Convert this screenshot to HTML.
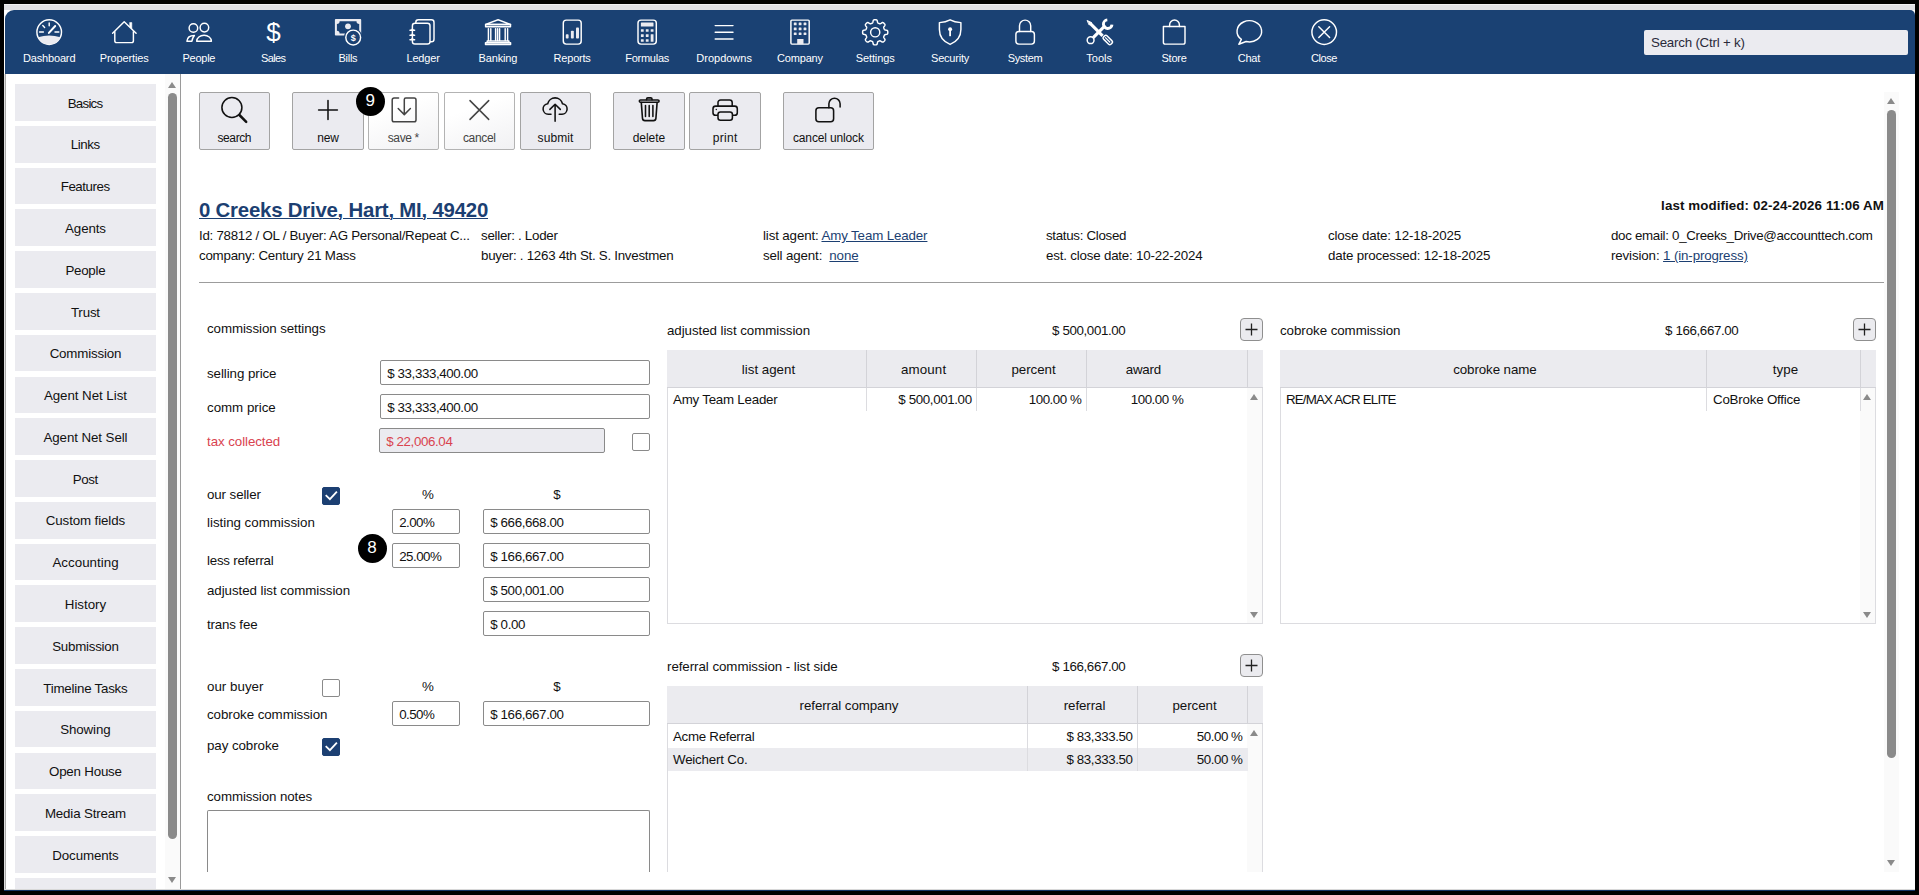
<!DOCTYPE html><html><head><meta charset='utf-8'><title>Commission</title><style>
*{box-sizing:border-box;margin:0;padding:0}
html,body{width:1919px;height:895px;overflow:hidden;background:#000}
body{position:relative;font-family:"Liberation Sans",sans-serif;font-size:13.33px;color:#111}
.a{position:absolute;white-space:nowrap}
.t{position:absolute;white-space:nowrap}
.sb{position:absolute;left:9px;width:141px;height:36.8px;background:#ebebf0}
.tb{position:absolute;top:92px;height:58px;background:#ebebf0;border:1px solid #a3a3a3;border-radius:2px}
.tb.dis{background:linear-gradient(160deg,#fff 30%,#f1f1f3);border-color:#b3b3b3}
.badge{position:absolute;width:29px;height:29px;border-radius:50%;background:#000}
.lnk{color:#1c3f72;text-decoration:underline}
.inp{position:absolute;height:25px;border:1px solid #8a8a8a;border-radius:2px;background:#fff}
.cb{position:absolute;width:18px;height:18px;border:1px solid #8a8a8a;border-radius:2px;background:#fff}
.cb.on{background:#1c3f72;border-color:#1c3f72}
.cb svg{position:absolute;left:0;top:0;width:16px;height:16px}
.th{position:absolute;background:#ebebef;border-right:1px solid #d3d3d8;border-bottom:1px solid #d3d3d8;height:37px}
.plus{position:absolute;width:23px;height:23px;border:1px solid #8f8f8f;border-radius:4px;background:#ebebef}
.plus svg{position:absolute;left:2px;top:2px;width:17px;height:17px}
.tri{position:absolute;width:0;height:0;border-left:4.2px solid transparent;border-right:4.2px solid transparent}
.up{border-bottom:6px solid #8a8a8a}
.dn{border-top:6px solid #8a8a8a}
</style></head><body>
<div class='a' style='left:4px;top:4px;width:1911px;height:887px;background:#fff'></div>
<div class='a' style='left:4px;top:4px;width:1911px;height:6px;background:#dfdfe3;border-top:1px solid #f0f0f2'></div>
<div class='a' style='left:5px;top:10px;width:1910px;height:64px;background:#1a4173;border-radius:9px 5px 0 0'></div>
<div class='a' style='left:4px;top:890px;width:1911px;height:1px;background:#123364'></div>
<div class='a' style='left:4px;top:889px;width:1911px;height:1px;background:#d8d8d8'></div>
<div class='t' style='left:22.9px;top:49.8px;line-height:16px;font-size:11px;letter-spacing:-0.15px;color:#fff'>Dashboard</div>
<div class='t' style='left:99.8px;top:49.8px;line-height:16px;font-size:11px;letter-spacing:-0.13px;color:#fff'>Properties</div>
<div class='t' style='left:182.4px;top:49.8px;line-height:16px;font-size:11px;letter-spacing:-0.23px;color:#fff'>People</div>
<div class='t' style='left:261.0px;top:49.8px;line-height:16px;font-size:11px;letter-spacing:-0.65px;color:#fff'>Sales</div>
<div class='t' style='left:338.5px;top:49.8px;line-height:16px;font-size:11px;letter-spacing:-0.28px;color:#fff'>Bills</div>
<div class='t' style='left:406.5px;top:49.8px;line-height:16px;font-size:11px;letter-spacing:-0.19px;color:#fff'>Ledger</div>
<div class='t' style='left:478.6px;top:49.8px;line-height:16px;font-size:11px;letter-spacing:-0.17px;color:#fff'>Banking</div>
<div class='t' style='left:553.6px;top:49.8px;line-height:16px;font-size:11px;letter-spacing:-0.21px;color:#fff'>Reports</div>
<div class='t' style='left:625.2px;top:49.8px;line-height:16px;font-size:11px;letter-spacing:-0.25px;color:#fff'>Formulas</div>
<div class='t' style='left:696.3px;top:49.8px;line-height:16px;font-size:11px;color:#fff'>Dropdowns</div>
<div class='t' style='left:777.0px;top:49.8px;line-height:16px;font-size:11px;letter-spacing:-0.17px;color:#fff'>Company</div>
<div class='t' style='left:855.8px;top:49.8px;line-height:16px;font-size:11px;letter-spacing:-0.13px;color:#fff'>Settings</div>
<div class='t' style='left:931.0px;top:49.8px;line-height:16px;font-size:11px;letter-spacing:-0.21px;color:#fff'>Security</div>
<div class='t' style='left:1007.8px;top:49.8px;line-height:16px;font-size:11px;letter-spacing:-0.38px;color:#fff'>System</div>
<div class='t' style='left:1086.3px;top:49.8px;line-height:16px;font-size:11px;letter-spacing:0.01px;color:#fff'>Tools</div>
<div class='t' style='left:1161.4px;top:49.8px;line-height:16px;font-size:11px;letter-spacing:-0.19px;color:#fff'>Store</div>
<div class='t' style='left:1237.8px;top:49.8px;line-height:16px;font-size:11px;letter-spacing:-0.28px;color:#fff'>Chat</div>
<div class='t' style='left:1311.0px;top:49.8px;line-height:16px;font-size:11px;letter-spacing:-0.41px;color:#fff'>Close</div>
<div class='a' style='left:1644px;top:29.5px;width:264px;height:25px;background:#ebebf0;border-radius:2px'></div>
<div class='t' style='left:1651.0px;top:35.1px;line-height:16px;letter-spacing:-0.22px;color:#2a2a3a'>Search (Ctrl + k)</div>
<div class='a' style='left:4px;top:74px;width:177px;height:815px;background:#fff;border-left:1px solid #dcdcdc;border-right:1px solid #9a9a9a;overflow:hidden'>
<div class='a' style='left:0;top:0;width:1px;height:815px;background:#a8a8a8'></div>
<div class='sb' style='left:10px;top:10.0px'></div>
<div class='sb' style='left:10px;top:51.8px'></div>
<div class='sb' style='left:10px;top:93.6px'></div>
<div class='sb' style='left:10px;top:135.3px'></div>
<div class='sb' style='left:10px;top:177.1px'></div>
<div class='sb' style='left:10px;top:218.9px'></div>
<div class='sb' style='left:10px;top:260.7px'></div>
<div class='sb' style='left:10px;top:302.5px'></div>
<div class='sb' style='left:10px;top:344.2px'></div>
<div class='sb' style='left:10px;top:386.0px'></div>
<div class='sb' style='left:10px;top:427.8px'></div>
<div class='sb' style='left:10px;top:469.6px'></div>
<div class='sb' style='left:10px;top:511.4px'></div>
<div class='sb' style='left:10px;top:553.1px'></div>
<div class='sb' style='left:10px;top:594.9px'></div>
<div class='sb' style='left:10px;top:636.7px'></div>
<div class='sb' style='left:10px;top:678.5px'></div>
<div class='sb' style='left:10px;top:720.3px'></div>
<div class='sb' style='left:10px;top:762.0px'></div>
<div class='sb' style='left:10px;top:803.8px'></div>
<div class='a' style='left:160px;top:0;width:15px;height:815px;background:#fafafa'></div>
<div class='tri up' style='left:163.3px;top:7.5px'></div>
<div class='a' style='left:163px;top:19px;width:9px;height:746px;border-radius:5px;background:#8a8a8a'></div>
<div class='tri dn' style='left:163.3px;top:803px'></div>
</div>
<div class='t' style='left:67.7px;top:95.6px;line-height:16px;letter-spacing:-0.75px'>Basics</div>
<div class='t' style='left:70.8px;top:137.4px;line-height:16px;letter-spacing:-0.42px'>Links</div>
<div class='t' style='left:60.7px;top:179.2px;line-height:16px;letter-spacing:-0.44px'>Features</div>
<div class='t' style='left:65.1px;top:220.9px;line-height:16px;letter-spacing:-0.13px'>Agents</div>
<div class='t' style='left:65.4px;top:262.7px;line-height:16px;letter-spacing:-0.27px'>People</div>
<div class='t' style='left:70.9px;top:304.5px;line-height:16px;letter-spacing:-0.17px'>Trust</div>
<div class='t' style='left:49.7px;top:346.3px;line-height:16px;letter-spacing:-0.19px'>Commission</div>
<div class='t' style='left:43.9px;top:388.1px;line-height:16px;letter-spacing:-0.05px'>Agent Net List</div>
<div class='t' style='left:43.5px;top:429.8px;line-height:16px;letter-spacing:-0.09px'>Agent Net Sell</div>
<div class='t' style='left:72.7px;top:471.6px;line-height:16px;letter-spacing:-0.37px'>Post</div>
<div class='t' style='left:45.8px;top:513.4px;line-height:16px;letter-spacing:-0.12px'>Custom fields</div>
<div class='t' style='left:52.4px;top:555.2px;line-height:16px;letter-spacing:0.03px'>Accounting</div>
<div class='t' style='left:64.8px;top:597.0px;line-height:16px;letter-spacing:-0.02px'>History</div>
<div class='t' style='left:52.2px;top:638.7px;line-height:16px;letter-spacing:-0.25px'>Submission</div>
<div class='t' style='left:43.3px;top:680.5px;line-height:16px;letter-spacing:-0.23px'>Timeline Tasks</div>
<div class='t' style='left:60.3px;top:722.3px;line-height:16px;letter-spacing:-0.14px'>Showing</div>
<div class='t' style='left:49.0px;top:764.1px;line-height:16px;letter-spacing:-0.21px'>Open House</div>
<div class='t' style='left:44.9px;top:805.9px;line-height:16px;letter-spacing:-0.16px'>Media Stream</div>
<div class='t' style='left:52.3px;top:847.6px;line-height:16px;letter-spacing:-0.12px'>Documents</div>
<div class='tb' style='left:199px;width:71px'></div>
<div class='t' style='left:217.5px;top:129.5px;line-height:16px;font-size:12px;letter-spacing:-0.40px;color:#111'>search</div>
<div class='tb' style='left:292px;width:72px'></div>
<div class='t' style='left:317.2px;top:129.5px;line-height:16px;font-size:12px;letter-spacing:-0.16px;color:#111'>new</div>
<div class='tb dis' style='left:368px;width:71px'></div>
<div class='t' style='left:387.7px;top:129.5px;line-height:16px;font-size:12px;letter-spacing:-0.36px;color:#444'>save *</div>
<div class='tb dis' style='left:444px;width:71px'></div>
<div class='t' style='left:462.9px;top:129.5px;line-height:16px;font-size:12px;letter-spacing:-0.31px;color:#444'>cancel</div>
<div class='tb' style='left:520px;width:71px'></div>
<div class='t' style='left:537.6px;top:129.5px;line-height:16px;font-size:12px;letter-spacing:0.09px;color:#111'>submit</div>
<div class='tb' style='left:613px;width:72px'></div>
<div class='t' style='left:632.7px;top:129.5px;line-height:16px;font-size:12px;letter-spacing:-0.03px;color:#111'>delete</div>
<div class='tb' style='left:689px;width:72px'></div>
<div class='t' style='left:712.8px;top:129.5px;line-height:16px;font-size:12px;letter-spacing:0.28px;color:#111'>print</div>
<div class='tb' style='left:783px;width:91px'></div>
<div class='t' style='left:793.0px;top:129.5px;line-height:16px;font-size:12px;letter-spacing:-0.15px;color:#111'>cancel unlock</div>
<svg class='a' style='left:0;top:0' width='1919' height='895' viewBox='0 0 1919 895'><g stroke='#fff' fill='none' stroke-width='1.45' stroke-linecap='round' stroke-linejoin='round'><circle cx='49.2' cy='32.1' r='12.3'/><path d='M38 37.2Q49.2 33.6 60.4 37.2A12.3 12.3 0 0 1 38 37.2Z' fill='#ebebf0' stroke='none'/><path d='M39.6 32h3.8M55 32h3.8M49.2 23v2.8M42.8 25.6l1.8 1.8'/><path d='M48.9 32.9L55.2 26' stroke-width='2'/></g><g stroke='#fff' fill='none' stroke-width='1.45' stroke-linecap='round' stroke-linejoin='round' stroke-width='1.4'><path d='M112.6 33.3L124.2 21.8L136.1 33.3'/><path d='M114.8 31.6V41a1.6 1.6 0 0 0 1.6 1.6H131.8a1.6 1.6 0 0 0 1.6-1.6V31.6'/><path d='M129.9 22.6h1.9v6.2l-1.9-1.9z' fill='#fff' stroke-width='.6'/></g><g stroke='#fff' fill='none' stroke-width='1.45' stroke-linecap='round' stroke-linejoin='round'><circle cx='193.4' cy='28' r='4.3'/><circle cx='204.4' cy='27.6' r='4.3'/><path d='M196.7 41.2a7.35 5.9 0 0 1 14.7 0z'/><path d='M186.9 41.2C187.2 37.4 189.6 35.4 194.4 35.4C193 37 192.2 39 191.9 41.2Z'/></g><text x='273.5' y='40.8' font-size='26' fill='#fff' text-anchor='middle' font-family='Liberation Sans, sans-serif'>$</text><g><rect x='334.9' y='19.1' width='26.3' height='16.4' rx='.8' fill='#ebebf0'/><path d='M339.6 21.2H356.5A2.7 2.7 0 0 0 359.2 23.9V30.7A2.7 2.7 0 0 0 356.5 33.4H339.6A2.7 2.7 0 0 0 336.9 30.7V23.9A2.7 2.7 0 0 0 339.6 21.2Z' fill='#1a4173'/><circle cx='348' cy='26.3' r='2.9' fill='#ebebf0'/><circle cx='353.2' cy='37.5' r='9.3' fill='#1a4173'/><circle cx='353.2' cy='37.5' r='7.4' stroke='#fff' fill='none' stroke-width='1.45' stroke-linecap='round' stroke-linejoin='round'/><text x='353.2' y='40.7' font-size='9' font-weight='700' fill='#fff' text-anchor='middle' font-family='Liberation Sans, sans-serif'>$</text></g><g stroke='#fff' fill='none' stroke-width='1.45' stroke-linecap='round' stroke-linejoin='round'><rect x='415.8' y='19.8' width='18.2' height='22' rx='2.6'/><rect x='412.4' y='23.2' width='17.6' height='20.8' rx='2.6' fill='#1a4173'/><path d='M410 30.2h4.6M410 35.2h4.6M410 39.8h4.6' stroke-width='1.5'/><path d='M411.3 29.4l1-1 1 1zM411.3 34.4l1-1 1 1zM411.3 39l1-1 1 1z' fill='#fff' stroke-width='.6'/></g><g stroke='#fff' fill='none' stroke-width='1.45' stroke-linecap='round' stroke-linejoin='round' stroke-width='1.2' stroke-linejoin='miter'><path d='M485.6 24.4L498.1 19.8L510.5 24.4Z'/><path d='M485.6 24.4h24.9v2.3h-24.9z'/><path d='M488.4 28.6V40.6M490.8 28.6V40.6M495.6 28.6V40.6M497.6 28.6V40.6M499.6 28.6V40.6M505.2 28.6V40.6M507.6 28.6V40.6'/><path d='M487.2 40.9h21.7v1.8h-21.7zM485.5 42.7h25.1v1.8h-25.1z'/></g><g stroke='#fff' fill='none' stroke-width='1.45' stroke-linecap='round' stroke-linejoin='round'><rect x='563.3' y='20.1' width='17.9' height='24' rx='3'/></g><g fill='#ebebf0'><rect x='565.8' y='34.3' width='2.8' height='4.2' rx='.8'/><rect x='570.9' y='30.8' width='2.9' height='7.7' rx='.8'/><rect x='576' y='27.4' width='3' height='11.1' rx='.8'/></g><g stroke='#fff' fill='none' stroke-width='1.45' stroke-linecap='round' stroke-linejoin='round'><rect x='638' y='20.1' width='18.3' height='24' rx='3'/></g><g fill='#ebebf0'><rect x='640.9' y='22.5' width='12.6' height='3.9' rx='.5'/><rect x='640.9' y='29.2' width='2.8' height='2.6' rx='.3'/><rect x='640.9' y='34.3' width='2.8' height='2.6' rx='.3'/><rect x='640.9' y='39.2' width='2.8' height='2.6' rx='.3'/><rect x='645.8' y='29.2' width='2.8' height='2.6' rx='.3'/><rect x='645.8' y='34.3' width='2.8' height='2.6' rx='.3'/><rect x='645.8' y='39.2' width='2.8' height='2.6' rx='.3'/><rect x='650.7' y='29.2' width='2.8' height='2.6' rx='.3'/><rect x='650.7' y='34.3' width='2.8' height='7.5' rx='.3'/></g><g stroke='#fff' fill='none' stroke-width='1.45' stroke-linecap='round' stroke-linejoin='round' stroke-width='1.5' stroke-linecap='butt'><path d='M715.2 25.6h17.8M715.2 32.3h17.8M715.2 39h17.8'/></g><g stroke='#fff' fill='none' stroke-width='1.45' stroke-linecap='round' stroke-linejoin='round' stroke-linejoin='miter'><rect x='790.9' y='20.1' width='18.3' height='24' rx='1'/></g><g fill='#ebebf0'><rect x='793.8' y='22.5' width='2.8' height='2.7' rx='.5'/><rect x='793.8' y='27.5' width='2.8' height='2.7' rx='.5'/><rect x='793.8' y='32.4' width='2.8' height='2.7' rx='.5'/><rect x='798.7' y='22.5' width='2.8' height='2.7' rx='.5'/><rect x='798.7' y='27.5' width='2.8' height='2.7' rx='.5'/><rect x='798.7' y='32.4' width='2.8' height='2.7' rx='.5'/><rect x='803.6' y='22.5' width='2.8' height='2.7' rx='.5'/><rect x='803.6' y='27.5' width='2.8' height='2.7' rx='.5'/><rect x='803.6' y='32.4' width='2.8' height='2.7' rx='.5'/><rect x='797.2' y='39' width='6.3' height='5.2'/></g><g stroke='#fff' fill='none' stroke-width='1.45' stroke-linecap='round' stroke-linejoin='round'><path d='M887.80 32.30 L887.79 32.63 L887.77 32.96 L887.72 33.29 L887.64 33.61 L887.47 33.91 L887.11 34.19 L886.48 34.39 L885.69 34.53 L885.06 34.67 L884.69 34.84 L884.49 35.05 L884.36 35.28 L884.26 35.51 L884.16 35.74 L884.07 35.97 L883.97 36.21 L883.88 36.44 L883.79 36.67 L883.72 36.93 L883.71 37.21 L883.85 37.60 L884.19 38.14 L884.66 38.80 L884.96 39.39 L885.01 39.83 L884.92 40.17 L884.75 40.46 L884.55 40.72 L884.34 40.97 L884.11 41.21 L883.87 41.44 L883.62 41.65 L883.36 41.85 L883.07 42.02 L882.73 42.11 L882.29 42.06 L881.70 41.76 L881.04 41.29 L880.50 40.95 L880.11 40.81 L879.83 40.82 L879.57 40.89 L879.34 40.98 L879.11 41.07 L878.87 41.17 L878.64 41.26 L878.41 41.36 L878.18 41.46 L877.95 41.59 L877.74 41.79 L877.57 42.16 L877.43 42.79 L877.29 43.58 L877.09 44.21 L876.81 44.57 L876.51 44.74 L876.19 44.82 L875.86 44.87 L875.53 44.89 L875.20 44.90 L874.87 44.89 L874.54 44.87 L874.21 44.82 L873.89 44.74 L873.59 44.57 L873.31 44.21 L873.11 43.58 L872.97 42.79 L872.83 42.16 L872.66 41.79 L872.45 41.59 L872.22 41.46 L871.99 41.36 L871.76 41.26 L871.53 41.17 L871.29 41.07 L871.06 40.98 L870.83 40.89 L870.57 40.82 L870.29 40.81 L869.90 40.95 L869.36 41.29 L868.70 41.76 L868.11 42.06 L867.67 42.11 L867.33 42.02 L867.04 41.85 L866.78 41.65 L866.53 41.44 L866.29 41.21 L866.06 40.97 L865.85 40.72 L865.65 40.46 L865.48 40.17 L865.39 39.83 L865.44 39.39 L865.74 38.80 L866.21 38.14 L866.55 37.60 L866.69 37.21 L866.68 36.93 L866.61 36.67 L866.52 36.44 L866.43 36.21 L866.33 35.97 L866.24 35.74 L866.14 35.51 L866.04 35.28 L865.91 35.05 L865.71 34.84 L865.34 34.67 L864.71 34.53 L863.92 34.39 L863.29 34.19 L862.93 33.91 L862.76 33.61 L862.68 33.29 L862.63 32.96 L862.61 32.63 L862.60 32.30 L862.61 31.97 L862.63 31.64 L862.68 31.31 L862.76 30.99 L862.93 30.69 L863.29 30.41 L863.92 30.21 L864.71 30.07 L865.34 29.93 L865.71 29.76 L865.91 29.55 L866.04 29.32 L866.14 29.09 L866.24 28.86 L866.33 28.63 L866.43 28.39 L866.52 28.16 L866.61 27.93 L866.68 27.67 L866.69 27.39 L866.55 27.00 L866.21 26.46 L865.74 25.80 L865.44 25.21 L865.39 24.77 L865.48 24.43 L865.65 24.14 L865.85 23.88 L866.06 23.63 L866.29 23.39 L866.53 23.16 L866.78 22.95 L867.04 22.75 L867.33 22.58 L867.67 22.49 L868.11 22.54 L868.70 22.84 L869.36 23.31 L869.90 23.65 L870.29 23.79 L870.57 23.78 L870.83 23.71 L871.06 23.62 L871.29 23.53 L871.53 23.43 L871.76 23.34 L871.99 23.24 L872.22 23.14 L872.45 23.01 L872.66 22.81 L872.83 22.44 L872.97 21.81 L873.11 21.02 L873.31 20.39 L873.59 20.03 L873.89 19.86 L874.21 19.78 L874.54 19.73 L874.87 19.71 L875.20 19.70 L875.53 19.71 L875.86 19.73 L876.19 19.78 L876.51 19.86 L876.81 20.03 L877.09 20.39 L877.29 21.02 L877.43 21.81 L877.57 22.44 L877.74 22.81 L877.95 23.01 L878.18 23.14 L878.41 23.24 L878.64 23.34 L878.87 23.43 L879.11 23.53 L879.34 23.62 L879.57 23.71 L879.83 23.78 L880.11 23.79 L880.50 23.65 L881.04 23.31 L881.70 22.84 L882.29 22.54 L882.73 22.49 L883.07 22.58 L883.36 22.75 L883.62 22.95 L883.87 23.16 L884.11 23.39 L884.34 23.63 L884.55 23.88 L884.75 24.14 L884.92 24.43 L885.01 24.77 L884.96 25.21 L884.66 25.80 L884.19 26.46 L883.85 27.00 L883.71 27.39 L883.72 27.67 L883.79 27.93 L883.88 28.16 L883.97 28.39 L884.07 28.63 L884.16 28.86 L884.26 29.09 L884.36 29.32 L884.49 29.55 L884.69 29.76 L885.06 29.93 L885.69 30.07 L886.48 30.21 L887.11 30.41 L887.47 30.69 L887.64 30.99 L887.72 31.31 L887.77 31.64 L887.79 31.97Z'/><circle cx='875.2' cy='32.3' r='4.6'/></g><g stroke='#fff' fill='none' stroke-width='1.45' stroke-linecap='round' stroke-linejoin='round'><path d='M950.1 19.8C947 21.6 943.2 22.4 939.4 22.6V29.5C939.4 37 943.8 41.8 950.1 44.4C956.4 41.8 960.9 37 960.9 29.5V22.6C957 22.4 953.2 21.6 950.1 19.8Z'/></g><g fill='#fff'><circle cx='950.1' cy='29.2' r='2'/><rect x='949.2' y='30' width='1.8' height='6.2'/></g><g stroke='#fff' fill='none' stroke-width='1.45' stroke-linecap='round' stroke-linejoin='round'><rect x='1015.9' y='31.5' width='18.5' height='12.6' rx='3'/><path d='M1019.5 31.5V25.7a5.6 5.6 0 0 1 11.2 0V31.5'/></g><g stroke='#fff' fill='none' stroke-width='1.45' stroke-linecap='round' stroke-linejoin='round'><path d='M1093.2 37.6L1105.4 25.4' stroke-width='3.1' stroke-linecap='butt'/><circle cx='1090.6' cy='40.2' r='3.4' stroke-width='1.5'/><path d='M1112 24.6A4.3 4.3 0 1 1 1107.3 19.9' stroke-width='2.9' stroke-linecap='butt'/><path d='M1090.2 23.4L1102.6 35.8' stroke-width='3.1' stroke-linecap='butt'/><path d='M1087.4 20.6L1091.6 22.6L1089.4 24.8Z' fill='#fff' stroke-width='.9'/><rect x='1102.6' y='37.6' width='10.4' height='4.8' rx='1.6' transform='rotate(45 1107.8 40)' stroke-width='1.5' fill='#1a4173'/><path d='M1105.4 37.6l4.4 4.4' stroke-width='1.2'/></g><g stroke='#fff' fill='none' stroke-width='1.45' stroke-linecap='round' stroke-linejoin='round'><path d='M1163.4 26.4H1185V42.5a1.6 1.6 0 0 1-1.6 1.6H1165a1.6 1.6 0 0 1-1.6-1.6Z'/><path d='M1169.6 26.4V25a4.9 4.9 0 0 1 9.8 0V26.4'/></g><g stroke='#fff' fill='none' stroke-width='1.45' stroke-linecap='round' stroke-linejoin='round'><path d='M1241.4 39.42A12.3 10.6 0 1 1 1246.1 41.54L1238.8 44.3Z'/></g><g stroke='#fff' fill='none' stroke-width='1.45' stroke-linecap='round' stroke-linejoin='round'><circle cx='1324.2' cy='32.1' r='12.3'/><path d='M1318.8 26.7l10.8 10.8M1329.6 26.7l-10.8 10.8'/></g><g stroke='#111' fill='none' stroke-width='1.55' stroke-linecap='round' stroke-linejoin='round'><circle cx='231.9' cy='107.5' r='10'/><path d='M239.4 115l6.8 6.8' stroke-width='2.5'/></g><g stroke='#111' fill='none' stroke-width='1.55' stroke-linecap='round' stroke-linejoin='round' stroke-linecap='butt'><path d='M328 100.6v18.8M318.6 110h18.8'/></g><g stroke='#444' fill='none' stroke-width='1.5' stroke-linecap='round' stroke-linejoin='round'><path d='M398.6 98.1H394a1.8 1.8 0 0 0-1.8 1.8V119.9a1.8 1.8 0 0 0 1.8 1.8H414.2a1.8 1.8 0 0 0 1.8-1.8V99.9a1.8 1.8 0 0 0-1.8-1.8H405.8a1.5 1.5 0 0 0-1.5 1.5V114.4M398.2 108.5L404.3 114.6L410.4 108.5'/></g><g stroke='#444' fill='none' stroke-width='1.5' stroke-linecap='round' stroke-linejoin='round'><path d='M470 100.6L488.7 119.4M488.7 100.6L470 119.4'/></g><g stroke='#111' fill='none' stroke-width='1.55' stroke-linecap='round' stroke-linejoin='round'><path d='M551 114.3H548.2A5.3 5.3 0 0 1 547.7 103.75A7.6 7.6 0 0 1 562.5 103.75A5.3 5.3 0 0 1 562 114.3H559.2'/><path d='M555.1 121.3V104.6M549.9 109.4L555.1 104.2L560.3 109.4'/></g><g stroke='#111' fill='none' stroke-width='1.55' stroke-linecap='round' stroke-linejoin='round'><rect x='639.3' y='99.9' width='19.8' height='2.4' rx='1.2'/><path d='M646.6 99.7v-.6a1.2 1.2 0 0 1 1.2-1.2h3a1.2 1.2 0 0 1 1.2 1.2v.6' stroke-width='1.6'/><path d='M641.3 102.6L642.5 118.4a2.4 2.4 0 0 0 2.4 2.2H653.5a2.4 2.4 0 0 0 2.4-2.2L657.1 102.6' stroke-width='1.6'/><path d='M645.5 105.6V116.4M649.2 105.6V116.4M652.9 105.6V116.4'/></g><g stroke='#111' fill='none' stroke-width='1.55' stroke-linecap='round' stroke-linejoin='round'><rect x='713' y='106.1' width='24.3' height='9.2' rx='2.6'/><path d='M718 106.1V102.6a2.6 2.6 0 0 1 2.6-2.6H729.6a2.6 2.6 0 0 1 2.6 2.6V106.1'/><rect x='718' y='111.9' width='14.4' height='8.3' rx='2.4' fill='#ebebf0'/><circle cx='716.3' cy='109.5' r='.7' fill='#111' stroke='none'/></g><g stroke='#111' fill='none' stroke-width='1.55' stroke-linecap='round' stroke-linejoin='round'><rect x='815.9' y='107.7' width='17.7' height='14' rx='3'/><path d='M828.9 107.7V103.8a5.6 5.6 0 0 1 11.2 0V107'/></g></svg>
<div class='badge' style='left:356px;top:87px'></div>
<div class='badge' style='left:358px;top:534px'></div>
<div class='t' style='left:365.5px;top:93.3px;line-height:16px;font-size:17px;letter-spacing:-0.27px;color:#fff'>9</div>
<div class='t' style='left:367.3px;top:540.2px;line-height:16px;font-size:17px;letter-spacing:-0.27px;color:#fff'>8</div>
<div class='t' style='left:199.0px;top:197.1px;line-height:26px;font-size:20.4px;font-weight:700;letter-spacing:-0.22px;color:#1c3f72'><span class='lnk' style='text-decoration-thickness:1.1px;text-underline-offset:1.2px'>0 Creeks Drive, Hart, MI, 49420</span></div>
<div class='t' style='left:1661.1px;top:197.9px;line-height:16px;font-weight:700;letter-spacing:0.10px'>last modified: 02-24-2026 11:06 AM</div>
<div class='t' style='left:199.0px;top:228.2px;line-height:16px;letter-spacing:-0.27px'>Id: 78812 / OL / Buyer: AG Personal/Repeat C...</div>
<div class='t' style='left:199.0px;top:248.2px;line-height:16px;letter-spacing:-0.23px'>company: Century 21 Mass</div>
<div class='t' style='left:481.0px;top:228.2px;line-height:16px;letter-spacing:-0.28px'>seller: . Loder</div>
<div class='t' style='left:481.0px;top:248.2px;line-height:16px;letter-spacing:-0.27px'>buyer: . 1263 4th St. S. Investmen</div>
<div class='t' style='left:763.0px;top:228.2px;line-height:16px;letter-spacing:-0.13px'>list agent: <span class='lnk'>Amy Team Leader</span></div>
<div class='t' style='left:763.0px;top:248.2px;line-height:16px;letter-spacing:-0.14px'>sell agent: &nbsp;<span class='lnk'>none</span></div>
<div class='t' style='left:1046.0px;top:228.2px;line-height:16px;letter-spacing:-0.31px'>status: Closed</div>
<div class='t' style='left:1046.0px;top:248.2px;line-height:16px;letter-spacing:-0.19px'>est. close date: 10-22-2024</div>
<div class='t' style='left:1328.0px;top:228.2px;line-height:16px;letter-spacing:-0.15px'>close date: 12-18-2025</div>
<div class='t' style='left:1328.0px;top:248.2px;line-height:16px;letter-spacing:-0.17px'>date processed: 12-18-2025</div>
<div class='t' style='left:1611.0px;top:228.2px;line-height:16px;letter-spacing:-0.31px'>doc email: 0_Creeks_Drive@accounttech.com</div>
<div class='t' style='left:1611.0px;top:248.2px;line-height:16px;letter-spacing:-0.13px'>revision: <span class='lnk'>1 (in-progress)</span></div>
<div class='a' style='left:199px;top:282px;width:1685px;height:1px;background:#9c9c9c'></div>
<div class='t' style='left:207.0px;top:321.2px;line-height:16px;letter-spacing:-0.08px'>commission settings</div>
<div class='t' style='left:207.0px;top:366.2px;line-height:16px;letter-spacing:-0.07px'>selling price</div>
<div class='inp' style='left:380px;top:360px;width:270px'></div>
<div class='t' style='left:387.2px;top:365.7px;line-height:16px;letter-spacing:-0.39px'>$ 33,333,400.00</div>
<div class='t' style='left:207.0px;top:400.2px;line-height:16px;letter-spacing:-0.02px'>comm price</div>
<div class='inp' style='left:380px;top:394px;width:270px'></div>
<div class='t' style='left:387.2px;top:399.7px;line-height:16px;letter-spacing:-0.39px'>$ 33,333,400.00</div>
<div class='t' style='left:207.0px;top:434.2px;line-height:16px;letter-spacing:-0.07px;color:#d9434f'>tax collected</div>
<div class='inp' style='left:379px;top:428px;width:226px;background:#ebebf0'></div>
<div class='t' style='left:386.2px;top:433.7px;line-height:16px;letter-spacing:-0.38px;color:#d9434f'>$ 22,006.04</div>
<div class='cb' style='left:632px;top:433px'></div>
<div class='t' style='left:207.0px;top:487.2px;line-height:16px;letter-spacing:-0.10px'>our seller</div>
<div class='cb on' style='left:322px;top:487px'><svg viewBox='0 0 16 16'><path d='M2.7 7.2L6.9 11.2L13.9 3.7' fill='none' stroke='#fff' stroke-width='1.8'/></svg></div>
<div class='t' style='left:422.1px;top:487.2px;line-height:16px;letter-spacing:-0.90px'>%</div>
<div class='t' style='left:553.3px;top:487.2px;line-height:16px;letter-spacing:-0.31px'>$</div>
<div class='t' style='left:207.0px;top:515.2px;line-height:16px;letter-spacing:-0.02px'>listing commission</div>
<div class='inp' style='left:392px;top:509px;width:68px'></div>
<div class='t' style='left:399.2px;top:514.7px;line-height:16px;letter-spacing:-0.56px'>2.00%</div>
<div class='inp' style='left:483px;top:509px;width:167px'></div>
<div class='t' style='left:490.2px;top:514.7px;line-height:16px;letter-spacing:-0.37px'>$ 666,668.00</div>
<div class='t' style='left:207.0px;top:553.2px;line-height:16px;letter-spacing:-0.24px'>less referral</div>
<div class='inp' style='left:392px;top:543px;width:68px'></div>
<div class='t' style='left:399.2px;top:548.7px;line-height:16px;letter-spacing:-0.52px'>25.00%</div>
<div class='inp' style='left:483px;top:543px;width:167px'></div>
<div class='t' style='left:490.2px;top:548.7px;line-height:16px;letter-spacing:-0.37px'>$ 166,667.00</div>
<div class='t' style='left:207.0px;top:583.2px;line-height:16px;letter-spacing:-0.06px'>adjusted list commission</div>
<div class='inp' style='left:483px;top:577px;width:167px'></div>
<div class='t' style='left:490.2px;top:582.7px;line-height:16px;letter-spacing:-0.37px'>$ 500,001.00</div>
<div class='t' style='left:207.0px;top:617.2px;line-height:16px;letter-spacing:-0.16px'>trans fee</div>
<div class='inp' style='left:483px;top:611px;width:167px'></div>
<div class='t' style='left:490.2px;top:616.7px;line-height:16px;letter-spacing:-0.36px'>$ 0.00</div>
<div class='t' style='left:207.0px;top:679.2px;line-height:16px;letter-spacing:0.02px'>our buyer</div>
<div class='cb' style='left:322px;top:679px'></div>
<div class='t' style='left:422.1px;top:679.2px;line-height:16px;letter-spacing:-0.90px'>%</div>
<div class='t' style='left:553.3px;top:679.2px;line-height:16px;letter-spacing:-0.31px'>$</div>
<div class='t' style='left:207.0px;top:707.2px;line-height:16px;letter-spacing:-0.06px'>cobroke commission</div>
<div class='inp' style='left:392px;top:701px;width:68px'></div>
<div class='t' style='left:399.2px;top:706.7px;line-height:16px;letter-spacing:-0.56px'>0.50%</div>
<div class='inp' style='left:483px;top:701px;width:167px'></div>
<div class='t' style='left:490.2px;top:706.7px;line-height:16px;letter-spacing:-0.37px'>$ 166,667.00</div>
<div class='t' style='left:207.0px;top:738.2px;line-height:16px;letter-spacing:-0.07px'>pay cobroke</div>
<div class='cb on' style='left:322px;top:738px'><svg viewBox='0 0 16 16'><path d='M2.7 7.2L6.9 11.2L13.9 3.7' fill='none' stroke='#fff' stroke-width='1.8'/></svg></div>
<div class='t' style='left:207.0px;top:789.2px;line-height:16px;letter-spacing:-0.10px'>commission notes</div>
<div class='a' style='left:207px;top:810px;width:443px;height:62px;border:1px solid #8a8a8a;border-bottom:none;border-radius:2px 2px 0 0;background:#fff'></div>
<div class='t' style='left:667.0px;top:323.2px;line-height:16px;letter-spacing:-0.06px'>adjusted list commission</div>
<div class='t' style='left:1052.0px;top:323.2px;line-height:16px;letter-spacing:-0.37px'>$ 500,001.00</div>
<div class='plus' style='left:1240px;top:318px'><svg viewBox='0 0 17 17'><path d='M8.5 2.5v12M2.5 8.5h12' stroke='#222' stroke-width='1.3' fill='none'/></svg></div>
<div class='a' style='left:667px;top:350px;width:596px;height:274px;border:1px solid #dcdce0;background:#fff'></div>
<div class='a' style='left:1247px;top:388px;width:15px;height:235px;background:#fafafa'></div>
<div class='th' style='left:667px;top:350px;width:200px;height:38px'></div>
<div class='t' style='left:741.8px;top:362.4px;line-height:16px'>list agent</div>
<div class='th' style='left:867px;top:350px;width:110px;height:38px'></div>
<div class='t' style='left:901.0px;top:362.4px;line-height:16px;letter-spacing:0.13px'>amount</div>
<div class='th' style='left:977px;top:350px;width:110px;height:38px'></div>
<div class='t' style='left:1011.4px;top:362.4px;line-height:16px;letter-spacing:-0.04px'>percent</div>
<div class='th' style='left:1087px;top:350px;width:161px;height:38px'></div>
<div class='t' style='left:1125.7px;top:362.4px;line-height:16px;letter-spacing:-0.19px'>award</div>
<div class='th' style='left:1248px;top:350px;width:15px;height:38px;border-right:none'></div>
<div class='t' style='left:673.0px;top:392.2px;line-height:16px;letter-spacing:-0.23px'>Amy Team Leader</div>
<div class='a' style='left:866px;top:388px;width:1px;height:23px;background:#dcdce0'></div>
<div class='t' style='left:898.3px;top:392.2px;line-height:16px;letter-spacing:-0.37px'>$ 500,001.00</div>
<div class='a' style='left:976px;top:388px;width:1px;height:23px;background:#dcdce0'></div>
<div class='t' style='left:1028.7px;top:392.2px;line-height:16px;letter-spacing:-0.44px'>100.00 %</div>
<div class='a' style='left:1086px;top:388px;width:1px;height:23px;background:#dcdce0'></div>
<div class='t' style='left:1130.7px;top:392.2px;line-height:16px;letter-spacing:-0.44px'>100.00 %</div>
<div class='tri up' style='left:1249.7px;top:394px;border-left-width:4.5px;border-right-width:4.5px;border-bottom-width:6px'></div>
<div class='tri dn' style='left:1249.7px;top:612px;border-left-width:4.5px;border-right-width:4.5px;border-top-width:6px'></div>
<div class='t' style='left:1280.0px;top:323.2px;line-height:16px;letter-spacing:-0.06px'>cobroke commission</div>
<div class='t' style='left:1665.0px;top:323.2px;line-height:16px;letter-spacing:-0.37px'>$ 166,667.00</div>
<div class='plus' style='left:1853px;top:318px'><svg viewBox='0 0 17 17'><path d='M8.5 2.5v12M2.5 8.5h12' stroke='#222' stroke-width='1.3' fill='none'/></svg></div>
<div class='a' style='left:1280px;top:350px;width:596px;height:274px;border:1px solid #dcdce0;background:#fff'></div>
<div class='a' style='left:1860px;top:388px;width:15px;height:235px;background:#fafafa'></div>
<div class='th' style='left:1280px;top:350px;width:427px;height:38px'></div>
<div class='t' style='left:1453.2px;top:362.4px;line-height:16px;letter-spacing:-0.09px'>cobroke name</div>
<div class='th' style='left:1707px;top:350px;width:154px;height:38px'></div>
<div class='t' style='left:1772.8px;top:362.4px;line-height:16px;letter-spacing:0.08px'>type</div>
<div class='th' style='left:1861px;top:350px;width:15px;height:38px;border-right:none'></div>
<div class='t' style='left:1286.0px;top:392.2px;line-height:16px;letter-spacing:-0.83px'>RE/MAX ACR ELITE</div>
<div class='a' style='left:1706px;top:388px;width:1px;height:23px;background:#dcdce0'></div>
<div class='t' style='left:1713.0px;top:392.2px;line-height:16px;letter-spacing:-0.21px'>CoBroke Office</div>
<div class='a' style='left:1860px;top:388px;width:1px;height:23px;background:#dcdce0'></div>
<div class='tri up' style='left:1862.7px;top:394px;border-left-width:4.5px;border-right-width:4.5px;border-bottom-width:6px'></div>
<div class='tri dn' style='left:1862.7px;top:612px;border-left-width:4.5px;border-right-width:4.5px;border-top-width:6px'></div>
<div class='t' style='left:667.0px;top:659.2px;line-height:16px;letter-spacing:-0.06px'>referral commission - list side</div>
<div class='t' style='left:1052.0px;top:659.2px;line-height:16px;letter-spacing:-0.37px'>$ 166,667.00</div>
<div class='plus' style='left:1240px;top:654px'><svg viewBox='0 0 17 17'><path d='M8.5 2.5v12M2.5 8.5h12' stroke='#222' stroke-width='1.3' fill='none'/></svg></div>
<div class='a' style='left:667px;top:686px;width:596px;height:186px;border:1px solid #dcdce0;border-bottom:none;background:#fff'></div>
<div class='a' style='left:1247px;top:724px;width:15px;height:148px;background:#fafafa'></div>
<div class='th' style='left:667px;top:686px;width:361px;height:38px'></div>
<div class='t' style='left:799.6px;top:698.4px;line-height:16px;letter-spacing:-0.08px'>referral company</div>
<div class='th' style='left:1028px;top:686px;width:110px;height:38px'></div>
<div class='t' style='left:1063.7px;top:698.4px;line-height:16px;letter-spacing:-0.07px'>referral</div>
<div class='th' style='left:1138px;top:686px;width:110px;height:38px'></div>
<div class='t' style='left:1172.4px;top:698.4px;line-height:16px;letter-spacing:-0.04px'>percent</div>
<div class='th' style='left:1248px;top:686px;width:15px;height:38px;border-right:none'></div>
<div class='t' style='left:673.0px;top:728.8px;line-height:16px;letter-spacing:-0.29px'>Acme Referral</div>
<div class='a' style='left:1027px;top:724px;width:1px;height:24px;background:#dcdce0'></div>
<div class='t' style='left:1066.4px;top:728.8px;line-height:16px;letter-spacing:-0.38px'>$ 83,333.50</div>
<div class='a' style='left:1137px;top:724px;width:1px;height:24px;background:#dcdce0'></div>
<div class='t' style='left:1196.8px;top:728.8px;line-height:16px;letter-spacing:-0.46px'>50.00 %</div>
<div class='a' style='left:668px;top:748px;width:580px;height:23px;background:#ebebef'></div>
<div class='t' style='left:673.0px;top:751.8px;line-height:16px;letter-spacing:-0.20px'>Weichert Co.</div>
<div class='a' style='left:1027px;top:748px;width:1px;height:23px;background:#dcdce0'></div>
<div class='t' style='left:1066.4px;top:751.8px;line-height:16px;letter-spacing:-0.38px'>$ 83,333.50</div>
<div class='a' style='left:1137px;top:748px;width:1px;height:23px;background:#dcdce0'></div>
<div class='t' style='left:1196.8px;top:751.8px;line-height:16px;letter-spacing:-0.46px'>50.00 %</div>
<div class='tri up' style='left:1249.7px;top:730px;border-left-width:4.5px;border-right-width:4.5px;border-bottom-width:6px'></div>
<div class='a' style='left:1884px;top:92px;width:15px;height:780px;background:#fafafa'></div>
<div class='tri up' style='left:1887.3px;top:98px'></div>
<div class='a' style='left:1887px;top:110px;width:9px;height:648px;border-radius:5px;background:#8a8a8a'></div>
<div class='tri dn' style='left:1887.3px;top:859.5px'></div>
</body></html>
